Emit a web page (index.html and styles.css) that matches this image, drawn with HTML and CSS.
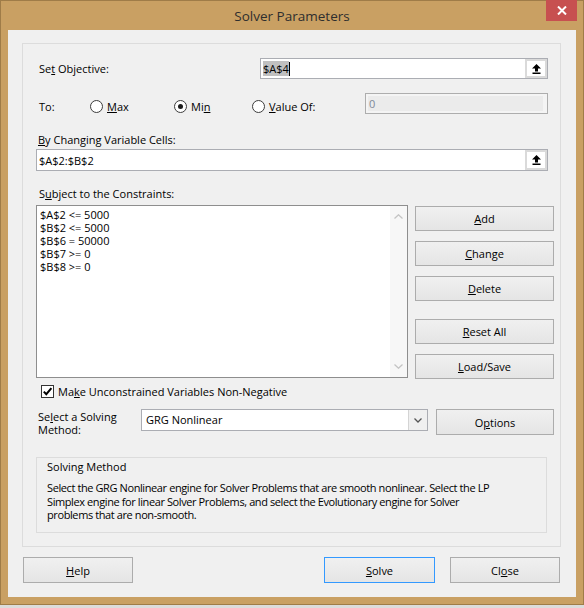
FILE: index.html
```html
<!DOCTYPE html>
<html>
<head>
<meta charset="utf-8">
<title>Solver Parameters</title>
<link rel="stylesheet" href="styles.css">
</head>
<body>
<div class="window">
  <div class="titlebar">
    <span class="title">Solver Parameters</span>
    <div class="close">
      <svg width="10" height="9" viewBox="0 0 10 9"><path d="M1 0.5 L9 8.5 M9 0.5 L1 8.5" stroke="#fff" stroke-width="2"/></svg>
    </div>
  </div>
  <div class="client">
    <div class="panel">
      <div class="row-obj">
        <span class="obj-label">Se<u>t</u> Objective:</span>
        <div class="refbox obj">
          <span class="val"><span class="sel">$A$4</span><span class="caret"></span></span>
          <span class="refbtn"><span class="refbtn-in"><svg width="9" height="10" viewBox="0 0 9 10"><path d="M4.5 0 L9 4.5 H6 V7.5 H3 V4.5 H0 Z" fill="#000"/><rect x="0.5" y="8.5" width="8" height="1.5" fill="#000"/></svg></span></span>
        </div>
      </div>
      <div class="row-to">
        <div class="to-part">
          <span class="to-label">To:</span>
          <span class="opt opt-max"><span class="radio"></span><span><u>M</u>ax</span></span>
          <span class="opt opt-min"><span class="radio on"></span><span>Mi<u>n</u></span></span>
          <span class="opt opt-val"><span class="radio"></span><span><u>V</u>alue Of:</span></span>
        </div>
        <div class="dis-box"><div class="dis-inner">0</div></div>
      </div>
      <div class="lbl lbl-changing"><u>B</u>y Changing Variable Cells:</div>
      <div class="refbox wide">
        <span class="val">$A$2:$B$2</span>
        <span class="refbtn"><span class="refbtn-in"><svg width="9" height="10" viewBox="0 0 9 10"><path d="M4.5 0 L9 4.5 H6 V7.5 H3 V4.5 H0 Z" fill="#000"/><rect x="0.5" y="8.5" width="8" height="1.5" fill="#000"/></svg></span></span>
      </div>
      <div class="lbl lbl-subject">S<u>u</u>bject to the Constraints:</div>
      <div class="constraints-row">
        <div class="listbox">
          <div class="list-items">
            <div>$A$2 &lt;= 5000</div>
            <div>$B$2 &lt;= 5000</div>
            <div>$B$6 = 50000</div>
            <div>$B$7 &gt;= 0</div>
            <div>$B$8 &gt;= 0</div>
          </div>
          <div class="vscroll">
            <svg width="9" height="5" viewBox="0 0 9 5"><path d="M0.5 4.5 L4.5 0.8 L8.5 4.5" fill="none" stroke="#c4c4c4" stroke-width="1.3"/></svg>
            <svg width="9" height="5" viewBox="0 0 9 5"><path d="M0.5 0.5 L4.5 4.2 L8.5 0.5" fill="none" stroke="#c4c4c4" stroke-width="1.3"/></svg>
          </div>
        </div>
        <div class="btn-col">
          <div class="btn"><span><u>A</u>dd</span></div>
          <div class="btn gap10"><span><u>C</u>hange</span></div>
          <div class="btn gap10"><span><u>D</u>elete</span></div>
          <div class="btn gap18"><span><u>R</u>eset All</span></div>
          <div class="btn gap10"><span><u>L</u>oad/Save</span></div>
        </div>
      </div>
      <div class="check-row">
        <span class="checkbox"><svg width="11" height="11" viewBox="0 0 11 11"><path d="M1.8 5.6 L4.3 8.2 L9.4 2.2" fill="none" stroke="#000" stroke-width="2"/></svg></span>
        <span>Ma<u>k</u>e Unconstrained Variables Non-Negative</span>
      </div>
      <div class="method-row">
        <div class="method-label">Se<u>l</u>ect a Solving<br>Method:</div>
        <div class="select">
          <span class="select-val">GRG Nonlinear</span>
          <span class="select-arrow"><svg width="8" height="5" viewBox="0 0 8 5"><path d="M0.5 0.5 L4 4 L7.5 0.5" fill="none" stroke="#555" stroke-width="1.3"/></svg></span>
        </div>
        <div class="btn options"><span>O<u>p</u>tions</span></div>
      </div>
      <div class="method-box">
        <div class="method-title">Solving Method</div>
        <div class="method-desc">Select the GRG Nonlinear engine for Solver Problems that are smooth nonlinear. Select the LP<br>Simplex engine for linear Solver Problems, and select the Evolutionary engine for Solver<br>problems that are non-smooth.</div>
      </div>
    </div>
    <div class="footer">
      <div class="btn fbtn help"><span><u>H</u>elp</span></div>
      <div class="btn fbtn solve"><span><u>S</u>olve</span></div>
      <div class="btn fbtn closebtn"><span>Cl<u>o</u>se</span></div>
    </div>
  </div>
</div>
</body>
</html>
```
FILE: styles.css
```css
* { box-sizing: border-box; }
html, body { margin: 0; padding: 0; }
body {
  width: 584px;
  height: 608px;
  overflow: hidden;
  background: #dcdcdc;
  font-family: "Open Sans", "Liberation Sans", sans-serif;
  font-size: 11px;
  color: #000;
}
u { text-decoration-thickness: 1px; text-underline-offset: 1px; }

.window {
  width: 584px;
  height: 605px;
  background: #c9a063;
  border: 1px solid #9f7c48;
  padding: 0 7px 7px 7px;
  display: flex;
  flex-direction: column;
}
.titlebar {
  height: 29px;
  position: relative;
  display: flex;
  align-items: center;
  justify-content: center;
}
.title { font-size: 13.5px; color: #2e2e2e; }
.close {
  position: absolute;
  right: -1px;
  top: -1px;
  width: 31px;
  height: 21px;
  background: #c75050;
  display: flex;
  align-items: center;
  justify-content: center;
}

.client {
  flex: 1;
  background: #f0f0f0;
  padding: 13px 0 0 14px;
}
.panel {
  width: 539px;
  height: 504px;
  border: 1px solid #dcdcdc;
  padding-top: 14px;
}

.row-obj {
  display: flex;
  align-items: center;
  height: 21px;
  padding-left: 16px;
}
.obj-label { width: 221px; }

.refbox {
  display: flex;
  background: #fff;
  border: 1px solid #abadb3;
}
.refbox.obj { width: 288px; height: 21px; }
.refbox.wide { width: 512px; height: 22px; margin: 2px 0 0 13px; }
.refbox .val {
  flex: 1;
  display: flex;
  align-items: center;
  padding-left: 2px;
}
.sel { background: #c0c0c0; }
.caret { width: 1px; height: 14px; background: #000; }
.refbtn {
  width: 22px;
  background: #dadada;
  padding: 2px;
  display: flex;
}
.refbtn-in {
  flex: 1;
  background: #fff;
  display: flex;
  align-items: center;
  justify-content: center;
}

.row-to {
  display: flex;
  height: 21px;
  margin-top: 14px;
  padding-left: 16px;
}
.to-part {
  display: flex;
  align-items: center;
  padding-top: 5px;
}
.to-label { width: 51px; }
.opt { display: flex; align-items: center; gap: 4px; }
.opt-max { width: 84px; }
.opt-min { width: 78px; }
.opt-val { width: 113px; }
.radio {
  width: 13px;
  height: 13px;
  border-radius: 50%;
  border: 1px solid #3c3c3c;
  background: #fff;
  display: flex;
  align-items: center;
  justify-content: center;
}
.radio.on::after {
  content: "";
  width: 5px;
  height: 5px;
  border-radius: 50%;
  background: #1a1a1a;
}
.dis-box {
  width: 183px;
  height: 21px;
  border: 1px solid #adadad;
  background: #f4f4f4;
  padding: 2px 4px 2px 2px;
}
.dis-inner {
  height: 100%;
  background: #ebebeb;
  color: #7f8a99;
  padding-left: 1px;
  line-height: 15px;
}

.lbl { padding-left: 16px; line-height: 14px; }
.lbl-changing { margin-top: 19px; padding-left: 15px; }
.lbl-subject { margin-top: 16px; }

.constraints-row {
  display: flex;
  gap: 7px;
  margin-top: 4px;
  padding-left: 13px;
}
.listbox {
  width: 372px;
  height: 173px;
  background: #fff;
  border: 1px solid #8e8e8e;
  display: flex;
}
.list-items {
  flex: 1;
  padding: 2px 0 0 3px;
  line-height: 13px;
}
.vscroll {
  width: 17px;
  background: #f7f7f7;
  display: flex;
  flex-direction: column;
  align-items: center;
  justify-content: space-between;
  padding: 8px 0 8px;
}

.btn-col {
  width: 139px;
  display: flex;
  flex-direction: column;
  padding-top: 1px;
}
.btn {
  height: 25px;
  border: 1px solid #acacac;
  background: linear-gradient(#f0f0f0, #e5e5e5);
  display: flex;
  align-items: center;
  justify-content: center;
}
.gap10 { margin-top: 10px; }
.gap18 { margin-top: 18px; }

.check-row {
  display: flex;
  align-items: center;
  gap: 4px;
  height: 13px;
  margin-top: 6px;
  padding-left: 18px;
}
.checkbox {
  width: 13px;
  height: 13px;
  border: 1px solid #333;
  background: #fff;
  display: flex;
  align-items: center;
  justify-content: center;
}

.method-row {
  display: flex;
  height: 27px;
  margin-top: 11px;
  padding-left: 15px;
}
.method-label {
  width: 103px;
  padding-top: 2px;
  line-height: 12.5px;
}
.select {
  width: 287px;
  height: 22px;
  background: #fff;
  border: 1px solid #abadb3;
  display: flex;
}
.select-val {
  flex: 1;
  padding-left: 4px;
  line-height: 20px;
}
.select-arrow {
  width: 19px;
  background: #f0f0f0;
  border-left: 1px solid #d4d4d4;
  display: flex;
  align-items: center;
  justify-content: center;
}
.btn.options {
  width: 118px;
  height: 26px;
  margin-left: 8px;
}

.method-box {
  width: 511px;
  height: 76px;
  margin: 21px 0 0 13px;
  border: 1px solid #dcdcdc;
  padding: 2px 0 0 10px;
}
.method-title { line-height: 14px; }
.method-desc {
  margin-top: 7px;
  line-height: 13.5px;
  white-space: nowrap;
  letter-spacing: -0.4px;
}

.footer {
  display: flex;
  margin: 10px 0 0 1px;
}
.btn.fbtn { height: 26px; width: 110px; }
.btn.solve { width: 111px; margin-left: 191px; border-color: #3399ff; }
.btn.closebtn { margin-left: 15px; }
```
